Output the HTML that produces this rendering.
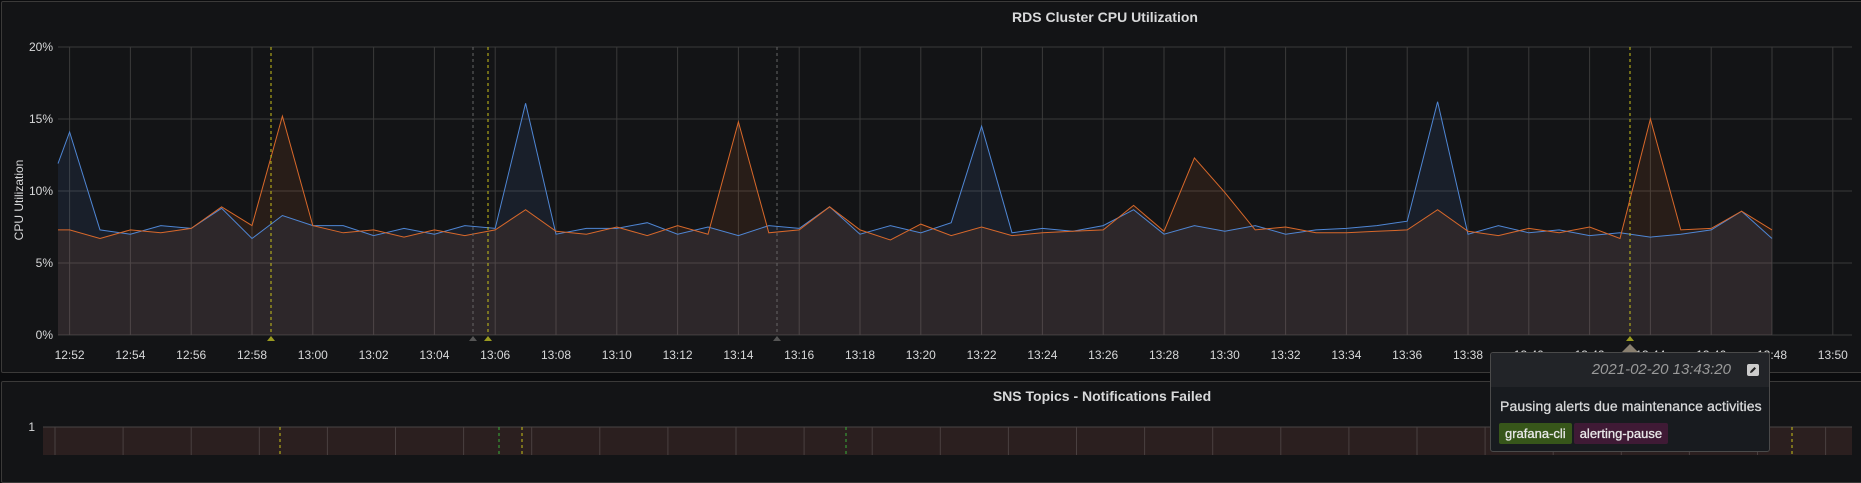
<!DOCTYPE html>
<html><head><meta charset="utf-8"><style>
html,body{margin:0;padding:0;background:#0b0c0e;width:1861px;height:455px;overflow:hidden;font-family:"Liberation Sans",sans-serif}
.p{position:absolute;background:#131416;border:1px solid #3b3a39;border-radius:2px}
svg{position:absolute;left:0;top:0}
.tt{position:absolute;left:1490px;top:352px;width:278px;height:98px;background:#181b1f;border:1px solid #4a4a4a;border-radius:3px;overflow:hidden}
.th{height:34px;background:#222428;color:#9a9a9a;font-style:italic;font-size:15px;line-height:34px;text-align:right;padding-right:38px;position:relative}
.ed{position:absolute;right:10px;top:11px;width:12px;height:12px;background:#ccc;border-radius:2px}
.tb{color:#d8d9da;font-size:14px;padding:11px 0 0 9px;white-space:nowrap;letter-spacing:0.1px;-webkit-text-stroke:0.3px #d8d9da}
.tag{display:inline-block;color:#e8e8e8;font-size:13px;padding:3px 6px;border-radius:2px;margin-right:2px;white-space:nowrap;-webkit-text-stroke:0.3px #e8e8e8}
</style></head><body>
<div class="p" style="left:1px;top:1px;width:1880px;height:370px"></div>
<div class="p" style="left:1px;top:381px;width:1880px;height:100px"></div>
<svg id="s" width="1861" height="455" xmlns="http://www.w3.org/2000/svg" font-family="Liberation Sans, sans-serif"></svg>
<div class="tt"><div class="th">2021-02-20 13:43:20<div class="ed"><svg width="12" height="12" viewBox="0 0 12 12"><path d="M3,9L3.5,7L7.5,3L9,4.5L5,8.5Z" fill="#222"/></svg></div></div>
<div class="tb">Pausing alerts due maintenance activities</div>
<div style="padding:9px 0 0 8px;white-space:nowrap"><span class="tag" style="background:#37561a">grafana-cli</span><span class="tag" style="background:#3f1a35">alerting-pause</span></div></div>
<script>
var s='';
var L=58,R=1852,T=47,B=335;
s+='<text x="1105" y="22" fill="#d8d9da" font-size="14" font-weight="bold" text-anchor="middle">RDS Cluster CPU Utilization</text>';
s+='<text x="1102" y="401" fill="#d8d9da" font-size="14" font-weight="bold" text-anchor="middle">SNS Topics - Notifications Failed</text>';
s+='<text transform="translate(23,200) rotate(-90)" fill="#d8d9da" font-size="12" text-anchor="middle">CPU Utilization</text>';
s+='<rect x="43" y="427" width="'+(R-43)+'" height="30" fill="#2b1f1f"/>';
s+='<line x1="43" y1="427" x2="'+R+'" y2="427" stroke="#4a4444"/>';
s+='<text x="35" y="431" fill="#d8d9da" font-size="12" text-anchor="end">1</text>';
for(var x=55;x<R;x+=68.1)s+='<line x1="'+x+'" y1="427" x2="'+x+'" y2="455" stroke="#4a4040"/>';
for(var i=0;i<=4;i++){var y=B-72*i;s+='<line x1="'+L+'" y1="'+y+'" x2="'+R+'" y2="'+y+'" stroke="#3a3a3a"/>';
s+='<text x="53" y="'+(y+4)+'" fill="#d8d9da" font-size="12" text-anchor="end">'+(i*5)+'%</text>';}
for(var k=0;k<30;k++){var x=69.6+60.8*k;if(x>R)break;s+='<line x1="'+x+'" y1="'+T+'" x2="'+x+'" y2="'+B+'" stroke="#3a3a3a"/>';
var m=52+2*k,h=12+Math.floor(m/60);m=m%60;s+='<text x="'+x+'" y="359" fill="#d8d9da" font-size="12" text-anchor="middle">'+h+':'+(m<10?'0':'')+m+'</text>';}
var b=[11.9,14.1,7.3,7.0,7.6,7.4,8.8,6.7,8.3,7.6,7.6,6.9,7.4,7.0,7.6,7.4,16.1,7.0,7.4,7.4,7.8,7.0,7.5,6.9,7.6,7.4,8.9,7.0,7.6,7.1,7.8,14.5,7.1,7.4,7.2,7.6,8.7,7.0,7.6,7.2,7.6,7.0,7.3,7.4,7.6,7.9,16.2,7.0,7.6,7.1,7.3,6.9,7.1,6.8,7.0,7.3,8.6,6.7];
var o=[7.3,7.3,6.7,7.3,7.1,7.4,8.9,7.6,15.2,7.6,7.1,7.3,6.8,7.3,6.9,7.3,8.7,7.2,7.0,7.5,6.9,7.6,7.0,14.8,7.1,7.3,8.9,7.3,6.6,7.7,6.9,7.5,6.9,7.1,7.2,7.3,9.0,7.2,12.3,9.9,7.3,7.5,7.1,7.1,7.2,7.3,8.7,7.2,6.9,7.4,7.1,7.5,6.7,15.0,7.3,7.4,8.6,7.3];
function X(i){return i==0?58:69.6+30.4*(i-1)}
function path(a){var p='';for(var i=0;i<a.length;i++)p+=(i?'L':'M')+X(i).toFixed(1)+','+(B-14.4*a[i]).toFixed(1);return p}
var pb=path(b),po=path(o),xe=X(b.length-1).toFixed(1);
s+='<path d="'+pb+'L'+xe+','+B+'L58,'+B+'Z" fill="rgba(87,148,242,0.09)"/>';
s+='<path d="'+po+'L'+xe+','+B+'L58,'+B+'Z" fill="rgba(255,120,40,0.09)"/>';
s+='<path d="'+pb+'" fill="none" stroke="#4f86d4" stroke-width="1"/>';
s+='<path d="'+po+'" fill="none" stroke="#d8682a" stroke-width="1"/>';
var an=[[271,'#c8c01a'],[473,'#666'],[488,'#c8c01a'],[777,'#666'],[1630,'#c8c01a']];
an.forEach(function(a){s+='<line x1="'+a[0]+'" y1="'+T+'" x2="'+a[0]+'" y2="'+B+'" stroke="'+a[1]+'" stroke-dasharray="3,3"/>';
s+='<path d="M'+(a[0]-4)+','+(B+6)+'L'+a[0]+','+(B+1)+'L'+(a[0]+4)+','+(B+6)+'Z" fill="'+(a[1]=='#666'?'#555':'#9a9a20')+'"/>';});
[[280,'#c8c01a'],[499,'#3ab03a'],[522,'#c8c01a'],[846,'#3ab03a'],[1792,'#c8c01a']].forEach(function(a){s+='<line x1="'+a[0]+'" y1="427" x2="'+a[0]+'" y2="455" stroke="'+a[1]+'" stroke-dasharray="3,3"/>';});
s+='<path d="M1622,352L1630,344L1638,352Z" fill="#8a8070"/>';
document.getElementById('s').innerHTML=s;
</script>
</body></html>
